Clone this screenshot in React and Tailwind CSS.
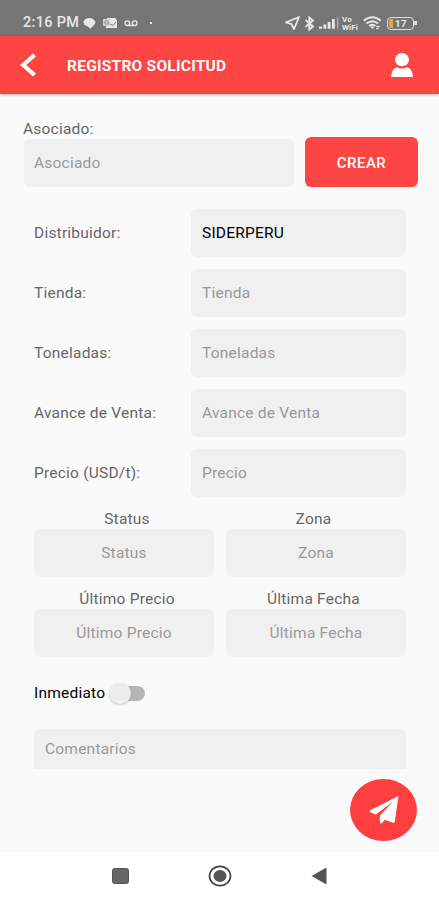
const rows = [
  { label: "Distribuidor:", value: "SIDERPERU" },
  { label: "Tienda:", placeholder: "Tienda" },
  { label: "Toneladas:", placeholder: "Toneladas" },
  { label: "Avance de Venta:", placeholder: "Avance de Venta" },
  { label: "Precio (USD/t):", placeholder: "Precio" },
];

const stats = [
  { name: "Status", offset: "pl-[6px]" },
  { name: "Zona", offset: "pr-[5px]" },
  { name: "Último Precio", offset: "pl-[6px]" },
  { name: "Última Fecha", offset: "pr-[5px]" },
];

function StatusBar() {
  return (
    <div className="flex h-9 items-end justify-between bg-[#757575] pr-[24px] pb-[5px] pl-[23px] text-[#e8e8e8]">
      <div className="flex h-4 items-center">
        <span className="w-[58px] text-[14.5px] leading-4 font-medium tracking-[0.3px] whitespace-nowrap">2:16 PM</span>
        <svg className="ml-[2px]" width="13" height="11" viewBox="0 0 13 11" fill="currentColor">
          <path d="M2.5 1Q6.5-.8 10 1L12.7 4 11 7 7.5 10.8 5 8.5 1.5 7 .3 3.5Z" />
        </svg>
        <svg className="ml-[7px]" width="14" height="12" viewBox="0 0 14 12">
          <path d="M4 1h8.5l1.5 3v7H3V4z" fill="currentColor" />
          <path d="M0 2h7v7H0z" fill="#cfcfcf" />
          <circle cx="3.5" cy="5.5" r="1.8" fill="none" stroke="#888" />
          <path d="m7 7 3 1.5L13 5" fill="none" stroke="#777" />
        </svg>
        <svg className="ml-[7px]" width="14" height="7" viewBox="0 0 14 7" fill="none" stroke="currentColor" strokeWidth="1.4">
          <circle cx="3.3" cy="3.2" r="2.3" />
          <circle cx="10.7" cy="3.2" r="2.3" />
          <path d="M3.3 5.5h7.4" />
        </svg>
        <span className="ml-3 h-[2px] w-[2px] bg-[#e8e8e8]" />
      </div>
      <div className="flex h-4 items-center">
        <svg width="15" height="14" viewBox="0 0 15 14" fill="none" stroke="currentColor" strokeWidth="1.8" strokeLinejoin="round">
          <path d="M14 1 1 6.3l5.5 1.9L9 13z" />
        </svg>
        <svg className="ml-[4px]" width="11" height="15" viewBox="0 0 11 15" fill="none" stroke="currentColor" strokeWidth="1.9">
          <path d="m1.5 4 7.5 6.5-3.7 3V1.5l3.7 3L1.5 11" />
        </svg>
        <svg className="ml-[4px]" width="20" height="12" viewBox="0 0 20 12" fill="currentColor">
          <path d="M0 9.5h3v2.2H0zM4.5 7.5h2.8v4.2H4.5zM8.7 5h2.8v6.7H8.7zM13 2h2.8v9.7H13z" />
          <path d="M18 0h1.5v11.7H18z" opacity=".45" />
        </svg>
        <div className="ml-[3px] flex w-[18px] flex-col text-[8px] leading-[7px] font-bold tracking-[0.1px]">
          <div className="h-[8px]">Vo</div>
          <div className="h-[7px]">WiFi</div>
        </div>
        <svg className="ml-[3px]" width="19" height="14" viewBox="0 0 19 14" fill="none" stroke="currentColor" strokeWidth="1.9">
          <path d="M.8 4.8Q9.3-2.2 17.8 4.8M3.5 7.5q5.8-4.6 11.6 0M6.2 10q3.1-2.5 6.2 0" />
          <path d="m9.3 13-2-2q2-1.5 4 0z" fill="currentColor" stroke="none" />
          <path d="M13 10.5h4M13 12.5h3" strokeWidth="1" />
        </svg>
        <div className="ml-[5px] flex h-[13px] w-[27px] items-center rounded-[4px] border-[1.5px] border-[#dedede] p-px">
          <span className="h-full w-[4px] rounded-l-[2px] bg-[#e6aa32]" />
          <span className="ml-[2px] text-[9.5px] leading-[9px] font-bold tracking-[0.5px]">17</span>
        </div>
        <span className="-mr-[2px] h-[4px] w-[3px] bg-[#dedede]" />
      </div>
    </div>
  );
}

function Header() {
  return (
    <header className="flex h-[58px] items-center bg-[#ff4444] pr-[26px] pl-5 text-white shadow-[0_1px_3px_rgba(0,0,0,0.25)]">
      <svg width="17" height="24" viewBox="0 0 17 24" fill="none" stroke="currentColor" strokeWidth="4.2">
        <path d="M14.5 2 3.2 12l11.3 10" />
      </svg>
      <h1 className="mt-[2px] ml-[30px] text-[15.5px] font-bold tracking-[0.25px] whitespace-nowrap">REGISTRO SOLICITUD</h1>
      <svg className="ml-auto" width="22" height="24" viewBox="0 0 22 24" fill="currentColor">
        <ellipse cx="11" cy="6.7" rx="7" ry="6.6" />
        <path d="M.3 24v-2.5q1.2-5.8 5.5-7.3 5.2 2.4 10.4 0 4.3 1.5 5.5 7.3V24z" />
      </svg>
    </header>
  );
}

function Field({ value, placeholder, className = "" }) {
  return (
    <div className={`flex h-12 items-center rounded-md bg-[#f0f0f0] px-[11px] ${className}`}>
      {value ? <span className="text-black">{value}</span> : <span className="text-[#999]">{placeholder}</span>}
    </div>
  );
}

export default function App() {
  return (
    <div className="flex h-[900px] w-full flex-col overflow-hidden bg-[#fafafa] font-[Roboto,sans-serif] text-[15.5px] leading-5 tracking-[0.22px] text-[#666]">
      <StatusBar />
      <Header />
      <main className="relative flex-1 pt-[25px]">
        <div className="h-[18px] pl-[23px]">Asociado:</div>
        <div className="flex items-end pr-[21px] pl-6">
          <Field placeholder="Asociado" className="w-[270px] pl-[10px]" />
          <button className="ml-auto h-[50px] w-[113px] rounded-md bg-[#ff4444] pt-[2px] text-[15px] font-medium tracking-[0.5px] text-white">CREAR</button>
        </div>

        <div className="mt-[22px] flex flex-col gap-3 pr-[33px] pl-[34px]">
          {rows.map((row) => (
            <div key={row.label} className="flex items-center justify-between">
              <span>{row.label}</span>
              <Field value={row.value} placeholder={row.placeholder} className="w-[215px]" />
            </div>
          ))}
        </div>

        <div className="mt-3 grid grid-cols-2 gap-x-3 gap-y-3 pr-[33px] pl-[34px]">
          {stats.map(({ name, offset }) => (
            <div key={name}>
              <div className={`h-5 text-center ${offset}`}>{name}</div>
              <Field placeholder={name} className="justify-center" />
            </div>
          ))}
        </div>

        <div className="mt-[26px] flex h-5 items-center pl-[34px]">
          <span className="text-black">Inmediato</span>
          <div className="relative ml-[16px] h-[15px] w-[24px] rounded-r-full bg-[#b5b5b5]">
            <span className="absolute -top-[3px] -left-[12px] h-[21px] w-[22px] rounded-full bg-[#ececec] shadow-[0_1px_2px_rgba(0,0,0,0.2)]" />
          </div>
        </div>

        <div className="mt-[26px] pr-[33px] pl-[34px]">
          <div className="flex h-10 items-center rounded-t-md bg-[#f0f0f0] px-[11px] text-[#999]">Comentarios</div>
        </div>

        <button className="absolute right-[22px] bottom-[11px] flex h-[62px] w-[67px] items-center justify-center rounded-[50%] bg-[#ff3f3f]">
          <svg width="30" height="28" viewBox="0 0 30 28" fill="#fff">
            <path d="M29.5 0 .8 14.5Q-.3 15.5 1 16.3L7 18.5 24 5.5 11.5 19Q10.3 20.5 11 26.5 11.5 28.3 13 27L15.8 23.7 24 26.8Q25.5 27.2 25.8 25.5Z" />
          </svg>
        </button>
      </main>
      <nav className="flex h-12 items-center bg-white pl-[113px] text-[#555]">
        <span className="h-[14px] w-[15px] rounded-[2px] bg-[#666] ring-1 ring-[#555]" />
        <svg className="ml-[80px]" width="24" height="22" viewBox="0 0 24 22" fill="none">
          <ellipse cx="12" cy="11" rx="10.5" ry="9.7" stroke="#444" strokeWidth="1.7" />
          <ellipse cx="12" cy="11" rx="6.5" ry="6" fill="#555" />
        </svg>
        <svg className="ml-[79px]" width="16" height="18" viewBox="0 0 16 18" fill="currentColor">
          <path d="M15.5.5v17L.5 9z" />
        </svg>
      </nav>
    </div>
  );
}
